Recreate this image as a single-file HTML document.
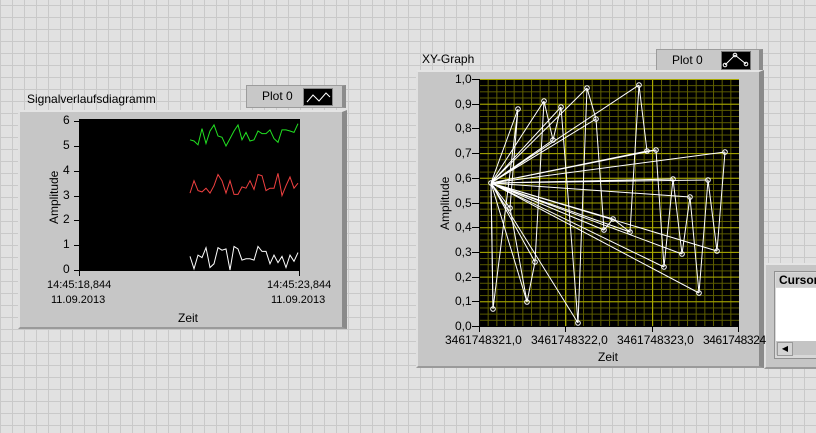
<!DOCTYPE html>
<html><head><meta charset="utf-8"><style>
body{margin:0;width:816px;height:433px;overflow:hidden;position:relative;font-family:"Liberation Sans",sans-serif;font-size:12px;color:#000;
background-color:#e1e1e1;
background-image:linear-gradient(to right,#c9c9c9 1px,transparent 1px),linear-gradient(to bottom,#c9c9c9 1px,transparent 1px);
background-size:12px 12px;background-position:0px 5px;}
.a{position:absolute;white-space:nowrap}
.s{font-size:11px}
.frame{position:absolute;background:#c6c6c6;border-top:2px solid #e4e4e4;border-left:2px solid #e0e0e0;border-right:5px solid #8a8a8a;border-bottom:2px solid #9a9a9a;box-sizing:border-box}
.leg{position:absolute;background:#c8c8c8;border:1px solid #9c9c9c;border-right:4px solid #8c8c8c;box-sizing:border-box}
.sw{position:absolute;background:#000;border:1px solid #888}
</style></head><body>

<!-- Left graph -->
<div class="a" style="left:27px;top:92px;">Signalverlaufsdiagramm</div>
<div class="leg" style="left:246px;top:85px;width:100px;height:23px;">
 <div class="a" style="left:15px;top:3px;">Plot 0</div>
 <div class="sw" style="left:56px;top:2px;width:28px;height:16px;"><svg width="28" height="16"><polyline points="3,13 9,6 15,12 22,4 26,8" fill="none" stroke="#fff" stroke-width="1"/></svg></div>
</div>
<div class="frame" style="left:18px;top:110px;width:329px;height:219px;"></div>
<svg class="a" style="left:0;top:0" width="816" height="433">
 <rect x="79" y="119" width="221" height="151" fill="#000"/>
 <g stroke="#000" stroke-width="1">
  <line x1="79.5" y1="119" x2="79.5" y2="276"/>
  <line x1="74" y1="270.5" x2="300" y2="270.5"/>
  <line x1="74" y1="121.5" x2="79" y2="121.5"/><line x1="74" y1="146.5" x2="79" y2="146.5"/><line x1="74" y1="171.5" x2="79" y2="171.5"/><line x1="74" y1="196.5" x2="79" y2="196.5"/><line x1="74" y1="220.5" x2="79" y2="220.5"/><line x1="74" y1="245.5" x2="79" y2="245.5"/>
  <line x1="299.5" y1="270" x2="299.5" y2="276"/>
 </g>
 <polyline fill="none" stroke="#22e022" stroke-width="1" points="190,139.8 194,141 198,144.8 202,128.6 206,143.5 210,131 214,124.9 218,136 222,137.3 226,146 230,138.6 234,131 238,124.9 242,139.8 246,132.4 250,141 254,139.8 258,131 262,133.6 266,133.6 270,129.9 274,138.6 278,142.3 282,129.9 286,129.9 290,131 294,132.4 298,123.7"/>
 <polyline fill="none" stroke="#f04040" stroke-width="1" points="190,193.1 194,180.7 198,190.6 202,191.9 206,188.2 210,193.1 214,185.7 218,174.5 222,180.7 226,193.1 230,180.7 234,194.4 238,194.4 242,186.9 246,188.2 250,180.7 254,189.4 258,174.5 262,175.8 266,190.6 270,188.2 274,188.2 278,173.3 282,195.6 286,185.7 290,177 294,188.2 298,183.2"/>
 <polyline fill="none" stroke="#fff" stroke-width="1" points="190,256.4 194,268.8 198,255.1 202,257.6 206,247.7 210,267.5 214,263.8 218,247.7 222,250.2 226,248.9 230,270 234,246.4 238,248.9 242,260.1 246,258.8 250,258.8 254,260.1 258,246.4 262,251.4 266,251.4 270,263.8 274,255.1 278,262.6 282,256.4 286,267.5 290,255.1 294,261.3 298,252.6"/>
</svg>
<div class="a" style="left:63px;top:113px;">6</div>
<div class="a" style="left:63px;top:138px;">5</div>
<div class="a" style="left:63px;top:163px;">4</div>
<div class="a" style="left:63px;top:188px;">3</div>
<div class="a" style="left:63px;top:212px;">2</div>
<div class="a" style="left:63px;top:237px;">1</div>
<div class="a" style="left:63px;top:262px;">0</div>
<div class="a" style="left:47px;transform:rotate(-90deg);transform-origin:0 0;top:224px;">Amplitude</div>
<div class="a s" style="left:47px;top:279px;">14:45:18,844</div>
<div class="a s" style="left:51px;top:294px;">11.09.2013</div>
<div class="a s" style="left:267px;top:279px;">14:45:23,844</div>
<div class="a s" style="left:271px;top:294px;">11.09.2013</div>
<div class="a" style="left:178px;top:311px;">Zeit</div>

<!-- XY graph -->
<div class="a" style="left:422px;top:52px;">XY-Graph</div>
<div class="leg" style="left:656px;top:49px;width:107px;height:22px;">
 <div class="a" style="left:15px;top:3px;">Plot 0</div>
 <div class="sw" style="left:64px;top:1px;width:28px;height:17px;border-color:#777"><svg width="28" height="17"><polyline points="3,13 13,3 24,12" fill="none" stroke="#fff"/><circle cx="3" cy="13" r="1.8" fill="none" stroke="#fff"/><circle cx="13" cy="3" r="1.8" fill="none" stroke="#fff"/><circle cx="24" cy="12" r="1.8" fill="none" stroke="#fff"/></svg></div>
</div>
<div class="frame" style="left:416px;top:70px;width:348px;height:298px;"></div>

<!-- cursor panel -->
<div class="frame" style="left:764px;top:263px;width:60px;height:106px;border-right:none"></div>
<div class="a" style="left:774px;top:271px;width:42px;height:86px;background:#d8d8d8;border:1px solid #909090;"></div>
<div class="a" style="left:776px;top:273px;width:40px;height:14px;background:#cfcfcf;font-weight:bold;font-size:12px;line-height:14px;padding-left:3px;overflow:hidden">Cursor</div>
<div class="a" style="left:776px;top:288px;width:40px;height:53px;background:#fff;"></div>
<div class="a" style="left:776px;top:341px;width:40px;height:14px;background:#c4c4c4;"></div>
<div class="a" style="left:777px;top:342px;width:14px;height:12px;background:#d4d4d4;border:1px solid #999;font-size:8px;line-height:12px;text-align:center">&#9664;</div>

<svg class="a" style="left:0;top:0" width="816" height="433">
 <defs>
  <pattern id="mn" x="479" y="79" width="8.667" height="6.175" patternUnits="userSpaceOnUse">
   <path d="M0 0.5 H8.667 M0.5 0 V6.175" stroke="#5e5e00" stroke-width="1" fill="none"/>
  </pattern>
 </defs>
 <rect x="479" y="79" width="260" height="247" fill="#000"/>
 <rect x="479" y="79" width="260" height="247" fill="url(#mn)"/>
 <g stroke="#a8a800" stroke-width="1">
  <line x1="479" y1="79.5" x2="739" y2="79.5"/><line x1="479" y1="104.2" x2="739" y2="104.2"/><line x1="479" y1="128.9" x2="739" y2="128.9"/><line x1="479" y1="153.6" x2="739" y2="153.6"/><line x1="479" y1="178.3" x2="739" y2="178.3"/><line x1="479" y1="203" x2="739" y2="203"/><line x1="479" y1="227.7" x2="739" y2="227.7"/><line x1="479" y1="252.4" x2="739" y2="252.4"/><line x1="479" y1="277.1" x2="739" y2="277.1"/><line x1="479" y1="301.8" x2="739" y2="301.8"/>
  <line x1="565.5" y1="79" x2="565.5" y2="326"/><line x1="652.5" y1="79" x2="652.5" y2="326"/>
 </g>
 <g stroke="#000" stroke-width="1">
  <line x1="479.5" y1="79" x2="479.5" y2="332"/>
  <line x1="472" y1="326.5" x2="739" y2="326.5"/>
  <line x1="472" y1="79.5" x2="479" y2="79.5"/><line x1="472" y1="104.5" x2="479" y2="104.5"/><line x1="472" y1="128.5" x2="479" y2="128.5"/><line x1="472" y1="153.5" x2="479" y2="153.5"/><line x1="472" y1="178.5" x2="479" y2="178.5"/><line x1="472" y1="203.5" x2="479" y2="203.5"/><line x1="472" y1="227.5" x2="479" y2="227.5"/><line x1="472" y1="252.5" x2="479" y2="252.5"/><line x1="472" y1="277.5" x2="479" y2="277.5"/><line x1="472" y1="301.5" x2="479" y2="301.5"/>
  <line x1="565.5" y1="326" x2="565.5" y2="332"/><line x1="652.5" y1="326" x2="652.5" y2="332"/><line x1="738.5" y1="326" x2="738.5" y2="332"/>
 </g>
 <g stroke="#fff" stroke-width="1" fill="none">
  <path d="M491 183L493 309M491 183L518 109M491 183L510 208M491 183L527 302M491 183L535 262M491 183L544 101M491 183L553 140M491 183L561 107M491 183L578 323M491 183L587 88M491 183L596 119M491 183L604 230M491 183L613 219M491 183L630 232M491 183L639 85M491 183L647 151M491 183L656 150M491 183L664 267M491 183L673 179M491 183L682 254M491 183L690 197M491 183L699 293M491 183L708 180M491 183L717 251M491 183L725 152"/>
  <polyline points="491,183 493,309 518,109 510,208 527,302 535,262 544,101 553,140 561,107 578,323 587,88 596,119 604,230 613,219 630,232 639,85 647,151 656,150 664,267 673,179 682,254 690,197 699,293 708,180 717,251 725,152"/>
  <g stroke-width="1">
  <circle cx="491" cy="183" r="2.3"/><circle cx="493" cy="309" r="2.3"/><circle cx="518" cy="109" r="2.3"/><circle cx="510" cy="208" r="2.3"/><circle cx="527" cy="302" r="2.3"/><circle cx="535" cy="262" r="2.3"/><circle cx="544" cy="101" r="2.3"/><circle cx="553" cy="140" r="2.3"/><circle cx="561" cy="107" r="2.3"/><circle cx="578" cy="323" r="2.3"/><circle cx="587" cy="88" r="2.3"/><circle cx="596" cy="119" r="2.3"/><circle cx="604" cy="230" r="2.3"/><circle cx="613" cy="219" r="2.3"/><circle cx="630" cy="232" r="2.3"/><circle cx="639" cy="85" r="2.3"/><circle cx="647" cy="151" r="2.3"/><circle cx="656" cy="150" r="2.3"/><circle cx="664" cy="267" r="2.3"/><circle cx="673" cy="179" r="2.3"/><circle cx="682" cy="254" r="2.3"/><circle cx="690" cy="197" r="2.3"/><circle cx="699" cy="293" r="2.3"/><circle cx="708" cy="180" r="2.3"/><circle cx="717" cy="251" r="2.3"/><circle cx="725" cy="152" r="2.3"/>
  </g>
 </g>
</svg>
<div class="a" style="left:455px;top:72px;">1,0</div>
<div class="a" style="left:455px;top:97px;">0,9</div>
<div class="a" style="left:455px;top:121px;">0,8</div>
<div class="a" style="left:455px;top:146px;">0,7</div>
<div class="a" style="left:455px;top:171px;">0,6</div>
<div class="a" style="left:455px;top:196px;">0,5</div>
<div class="a" style="left:455px;top:220px;">0,4</div>
<div class="a" style="left:455px;top:245px;">0,3</div>
<div class="a" style="left:455px;top:270px;">0,2</div>
<div class="a" style="left:455px;top:294px;">0,1</div>
<div class="a" style="left:455px;top:319px;">0,0</div>
<div class="a" style="left:438px;transform:rotate(-90deg);transform-origin:0 0;top:230px;">Amplitude</div>
<div class="a" style="left:445px;top:333px;">3461748321,0</div>
<div class="a" style="left:531px;top:333px;">3461748322,0</div>
<div class="a" style="left:617px;top:333px;">3461748323,0</div>
<div class="a" style="left:703px;top:333px;letter-spacing:-0.4px">3461748324</div>
<div class="a" style="left:598px;top:350px;">Zeit</div>
</body></html>
